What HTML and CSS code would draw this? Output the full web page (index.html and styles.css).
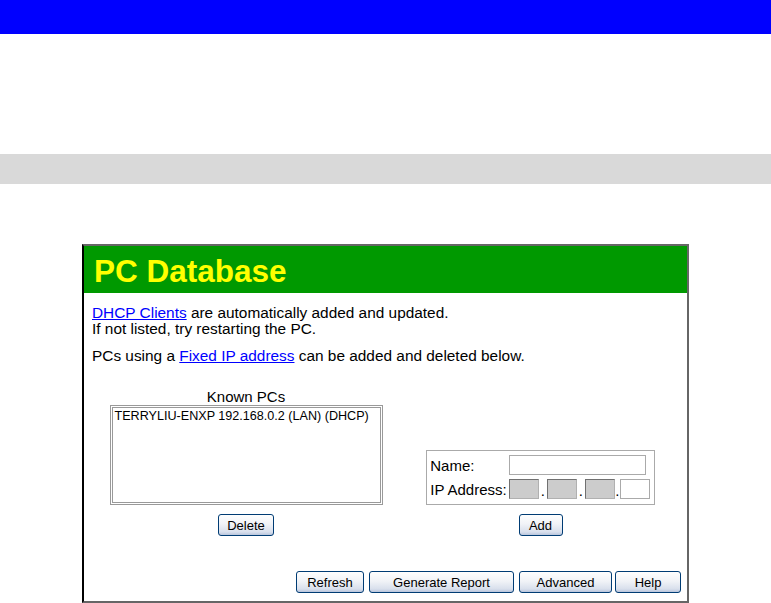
FILE: index.html
```html
<!DOCTYPE html>
<html lang="en">
<head>
    <meta charset="UTF-8">
    <title>PC Database</title>
    <link rel="stylesheet" href="styles.css">
</head>
<body>
    <div class="top-bar"></div>
    <div class="spacer"></div>
    <div class="sub-bar"></div>

    <div class="panel">
        <div class="panel-title">PC Database</div>
        <div class="content">
            <p class="intro">
                <a href="#">DHCP Clients</a> are automatically added and updated.<br>
                If not listed, try restarting the PC.
            </p>
            <p class="intro">PCs using a <a href="#">Fixed IP address</a> can be added and deleted below.</p>

            <div class="pcs">
                <div class="known">
                    <div class="known-label">Known PCs</div>
                    <div class="listbox">
                        <div class="list-item">TERRYLIU-ENXP 192.168.0.2 (LAN) (DHCP)</div>
                    </div>
                </div>
                <div class="add-form">
                    <table class="fields">
                        <tr>
                            <td>Name:</td>
                            <td><input type="text" class="name-input"></td>
                        </tr>
                        <tr>
                            <td>IP Address:</td>
                            <td class="ip"><input type="text" class="octet locked" disabled><span class="dot">.</span><input type="text" class="octet locked" disabled><span class="dot">.</span><input type="text" class="octet locked" disabled><span class="dot">.</span><input type="text" class="octet"></td>
                        </tr>
                    </table>
                </div>
                <div class="btn-cell"><button class="btn delete">Delete</button></div>
                <div class="btn-cell"><button class="btn add">Add</button></div>
            </div>

            <div class="actions">
                <button class="btn refresh">Refresh</button>
                <button class="btn report">Generate Report</button>
                <button class="btn advanced">Advanced</button>
                <button class="btn help">Help</button>
            </div>
        </div>
    </div>
</body>
</html>
```

FILE: styles.css
```css
body {
    margin: 0;
    font-family: "Liberation Sans", Arial, sans-serif;
    background-color: #fff;
    color: #000;
}

.top-bar {
    height: 34px;
    background-color: #0000ff;
}

.spacer {
    height: 120px;
}

.sub-bar {
    height: 30px;
    background-color: #d9d9d9;
}

.panel {
    margin: 60px 0 0 82px;
    width: 603px;
    border: 2px solid #666;
    border-left-color: #000;
}

.panel-title {
    background-color: #009900;
    color: #ffff00;
    font-weight: bold;
    font-size: 31.5px;
    height: 47px;
    line-height: 50px;
    padding-left: 10px;
}

.content {
    padding: 12px 6px 8px 8px;
    font-size: 15.4px;
}

.intro {
    margin: 0 0 11px 0;
    line-height: 16px;
}

.intro a {
    color: #0000ff;
}

.pcs {
    display: grid;
    grid-template-columns: 308px 1fr;
    row-gap: 9px;
    margin-top: 25px;
}

.known {
    display: flex;
    flex-direction: column;
    align-items: center;
}

.known-label {
    font-size: 15px;
    line-height: 16px;
}

.listbox {
    width: 265px;
    height: 94px;
    border: 3px double #999;
    background-color: #fff;
    font-size: 12.6px;
    padding: 0 0 0 2px;
}

.list-item {
    line-height: 16px;
}

.add-form {
    display: flex;
    justify-content: center;
    align-items: flex-end;
}

.fields {
    border: 1px solid #aaa;
    border-collapse: separate;
    border-spacing: 0;
    padding: 2px 4px 3px 3px;
    font-size: 15px;
}

.fields td {
    padding: 2px 0;
}

.fields td:first-child {
    padding-right: 2px;
}

.name-input {
    width: 133px;
    height: 16px;
    border: 1px solid #aaa;
    padding: 1px;
    margin: 0;
    display: block;
}

.ip {
    white-space: nowrap;
}

.dot {
    display: inline-block;
    width: 8px;
    text-align: center;
}

.dot:last-of-type {
    width: 5px;
}

.octet {
    width: 26px;
    height: 16px;
    border: 1px solid #aaa;
    padding: 1px;
    margin: 0;
    background-color: #fff;
    vertical-align: bottom;
}

.octet.locked {
    background-color: #cccccc;
    border-color: #707070 #b0b0b0 #b0b0b0 #707070;
}

.btn-cell {
    text-align: center;
}

.btn {
    font-family: "Liberation Sans", Arial, sans-serif;
    font-size: 13px;
    height: 22px;
    padding: 0;
    border: 1px solid #003c74;
    border-radius: 3px;
    background: linear-gradient(#fefefe 0%, #f1f3f7 45%, #d8dfec 85%, #b9c5dc 100%);
    color: #000;
}

.delete {
    width: 56px;
}

.add {
    width: 44px;
}

.actions {
    display: flex;
    justify-content: flex-end;
    gap: 5px;
    margin-top: 35px;
}

.refresh {
    width: 68px;
}

.report {
    width: 145px;
}

.advanced {
    width: 93px;
}

.help {
    width: 66px;
    margin-left: -2px;
}
```
